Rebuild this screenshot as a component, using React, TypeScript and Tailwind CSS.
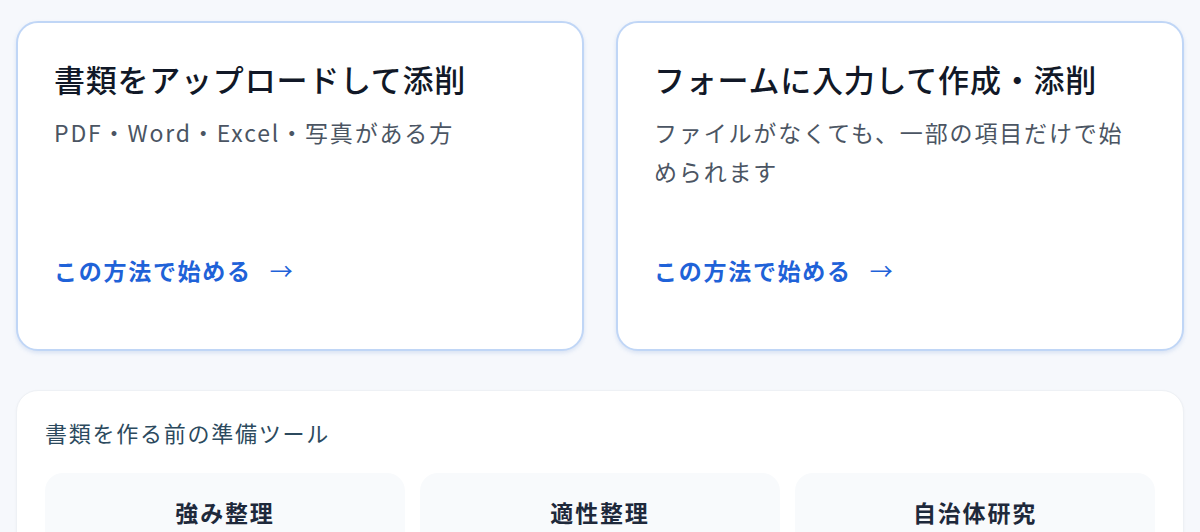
const FONT = '"Noto Sans CJK JP", "Noto Sans", sans-serif';

const methods = [
  {
    title: "書類をアップロードして添削",
    desc: "PDF・Word・Excel・写真がある方",
  },
  {
    title: "フォームに入力して作成・添削",
    desc: "ファイルがなくても、一部の項目だけで始められます",
  },
];

const tools = ["強み整理", "適性整理", "自治体研究"];

export default function App() {
  return (
    <div className="min-h-[532px] bg-[#f6f8fc] px-4 pt-[21px]" style={{ fontFamily: FONT }}>
      <div className="grid grid-cols-2 gap-8">
        {methods.map((m) => (
          <a
            key={m.title}
            href="#"
            className="flex h-[330px] flex-col rounded-[22px] border-2 border-[#c0d6f6] bg-white px-9 pb-[62px] pt-[34px] shadow-[0_2px_4px_rgba(96,140,210,0.2)]"
          >
            <h2 className="text-[31px] font-medium leading-[44px] tracking-[0.025em] text-[#111827]">{m.title}</h2>
            <p className="mt-3 text-[23px] leading-[39px] tracking-[0.08em] text-[#4b5563]">{m.desc}</p>
            <span className="mt-auto text-[23px] font-bold leading-[34px] tracking-[0.075em] text-[#1f62d8]">
              この方法で始める<span className="ml-[18px] font-normal">→</span>
            </span>
          </a>
        ))}
      </div>

      <section className="mt-[39px] rounded-[22px] border border-[#eef1f5] bg-white px-[28px] pt-[26px] pb-7 shadow-[0_1px_3px_rgba(15,23,42,0.04)]">
        <h3 className="text-[22px] leading-[30px] tracking-[0.08em] text-[#2c4a5e]">書類を作る前の準備ツール</h3>
        <div className="mt-[26px] grid grid-cols-3 gap-[15px]">
          {tools.map((t) => (
            <div key={t} className="rounded-[18px] bg-[#f8fafc] pt-[24px] pb-6 text-center">
              <span className="text-[23px] font-bold leading-[30px] tracking-[0.08em] text-[#1e293b]">{t}</span>
            </div>
          ))}
        </div>
      </section>
    </div>
  );
}
